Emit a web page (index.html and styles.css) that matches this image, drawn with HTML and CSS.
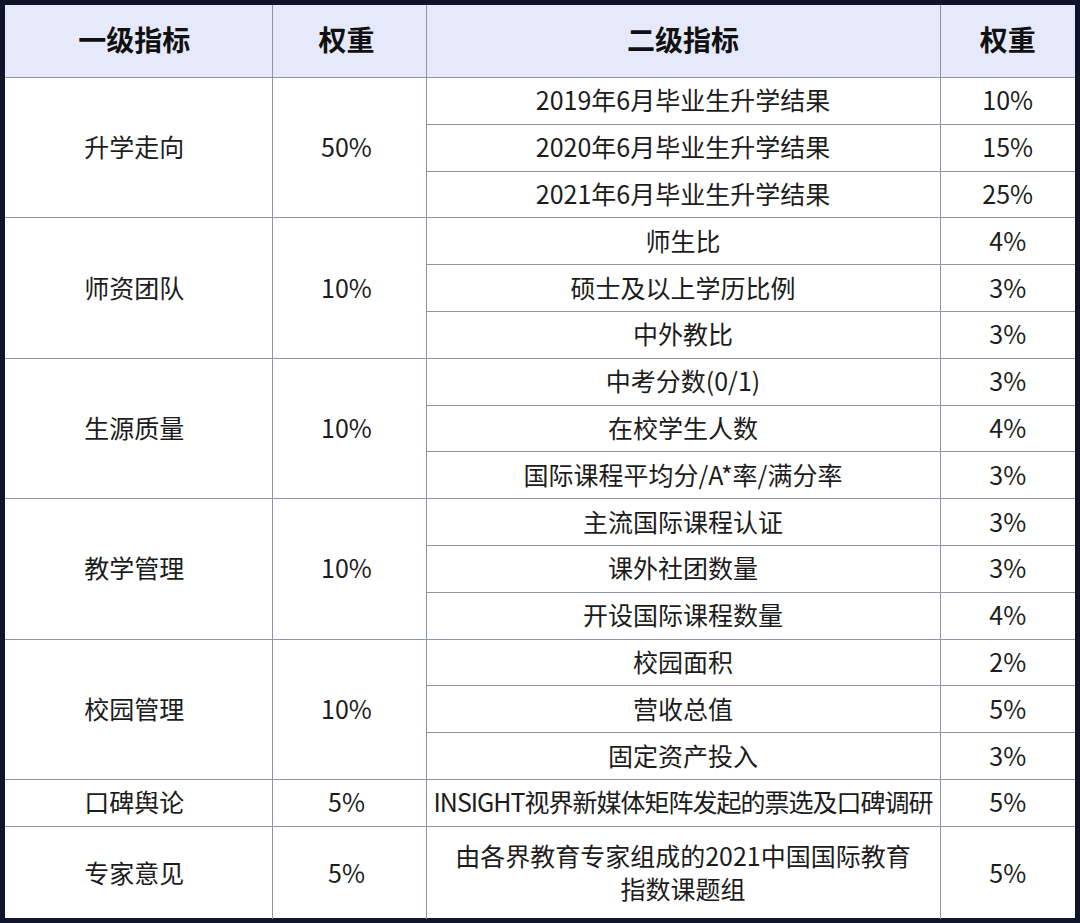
FILE: index.html
```html
<!DOCTYPE html>
<html lang="zh-CN">
<head>
<meta charset="utf-8">
<link rel="stylesheet" href="styles.css">
</head>
<body>
<div class="frame">
<table class="grid">
  <colgroup>
    <col class="c1"><col class="c2"><col class="c3"><col class="c4">
  </colgroup>
  <thead>
    <tr class="head"><th class="k1">一级指标</th><th class="k2">权重</th><th>二级指标</th><th>权重</th></tr>
  </thead>
  <tbody>
    <tr><td class="k1" rowspan="3">升学走向</td><td class="k2" rowspan="3">50%</td><td>2019年6月毕业生升学结果</td><td>10%</td></tr>
    <tr><td>2020年6月毕业生升学结果</td><td>15%</td></tr>
    <tr><td>2021年6月毕业生升学结果</td><td>25%</td></tr>
    <tr><td class="k1" rowspan="3">师资团队</td><td class="k2" rowspan="3">10%</td><td>师生比</td><td>4%</td></tr>
    <tr><td>硕士及以上学历比例</td><td>3%</td></tr>
    <tr><td>中外教比</td><td>3%</td></tr>
    <tr><td class="k1" rowspan="3">生源质量</td><td class="k2" rowspan="3">10%</td><td>中考分数(0/1)</td><td>3%</td></tr>
    <tr><td>在校学生人数</td><td>4%</td></tr>
    <tr><td>国际课程平均分/A*率/满分率</td><td>3%</td></tr>
    <tr><td class="k1" rowspan="3">教学管理</td><td class="k2" rowspan="3">10%</td><td>主流国际课程认证</td><td>3%</td></tr>
    <tr><td>课外社团数量</td><td>3%</td></tr>
    <tr><td>开设国际课程数量</td><td>4%</td></tr>
    <tr><td class="k1" rowspan="3">校园管理</td><td class="k2" rowspan="3">10%</td><td>校园面积</td><td>2%</td></tr>
    <tr><td>营收总值</td><td>5%</td></tr>
    <tr><td>固定资产投入</td><td>3%</td></tr>
    <tr><td class="k1">口碑舆论</td><td class="k2">5%</td><td class="tight">INSIGHT视界新媒体矩阵发起的票选及口碑调研</td><td>5%</td></tr>
    <tr class="tall"><td class="k1">专家意见</td><td class="k2">5%</td><td class="wrap">由各界教育专家组成的2021中国国际教育<br>指数课题组</td><td>5%</td></tr>
  </tbody>
</table>
</div>
</body>
</html>
```

FILE: styles.css
```css
html, body {
  margin: 0;
  padding: 0;
  background: #ffffff;
}
.frame {
  width: 1080px;
  height: 923px;
  box-sizing: border-box;
  border: 5px solid #11152b;
  background: #ffffff;
}
.grid {
  width: 1070px;
  border-collapse: collapse;
  border-style: hidden;
  table-layout: fixed;
  font-family: "Noto Sans CJK SC", "Noto Sans", sans-serif;
  color: #1c1c1c;
}
.c1 { width: 267px; }
.c2 { width: 154px; }
.c3 { width: 514px; }
.c4 { width: 135px; }
.grid th, .grid td {
  border: 1px solid #8d93ab;
  text-align: center;
  vertical-align: middle;
  padding: 0 0 3px 0;
}
.head th {
  background: #e6e9f9;
  height: 67px;
  font-size: 28px;
  font-weight: 700;
  color: #111111;
  padding-bottom: 5px;
}
.grid .k1 {
  padding-right: 8px;
}
.grid .k2 {
  padding-right: 5px;
}
.grid tbody tr {
  height: 46.8px;
}
.grid td {
  font-size: 25px;
  line-height: 32px;
}
.grid td.tight {
  letter-spacing: -1px;
}
.grid tbody tr.tall {
  height: 93px;
}
.grid td.wrap {
  line-height: 33px;
}
```
